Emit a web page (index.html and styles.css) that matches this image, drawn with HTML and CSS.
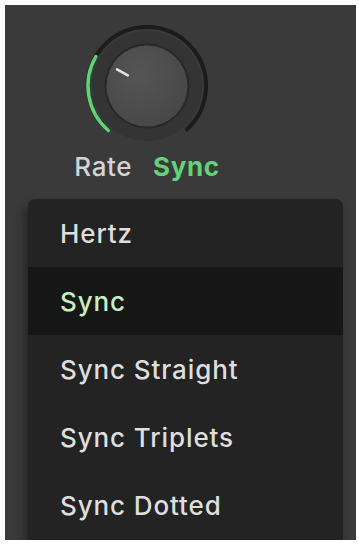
FILE: index.html
```html
<!DOCTYPE html>
<html>
<head>
<meta charset="utf-8">
<link rel="stylesheet" href="styles.css">
</head>
<body>
<div class="panel">
  <div class="control">
    <svg class="knob" width="130" height="130" viewBox="0 0 130 130">
      <defs>
        <radialGradient id="kg" cx="40%" cy="35%" r="70%">
          <stop offset="0" stop-color="#555555"/>
          <stop offset="1" stop-color="#474747"/>
        </radialGradient>
      </defs>
      <circle cx="65" cy="65" r="55" fill="#343434"/>
      <path d="M26.3 109.5 A59 59 0 1 1 103.7 109.5" fill="none" stroke="#1c1c1c" stroke-width="4"/>
      <path d="M26.3 109.5 A59 59 0 0 1 13.9 35.5" fill="none" stroke="#5fd27a" stroke-width="3.5" stroke-linecap="round"/>
      <circle cx="65" cy="65" r="42.5" fill="#282828"/>
      <circle cx="65" cy="65" r="40.5" fill="url(#kg)"/>
      <line x1="45.8" y1="54.3" x2="35" y2="48.3" stroke="#e2e2e2" stroke-width="2.6" stroke-linecap="round"/>
    </svg>
    <div class="labels">
      <span class="label">Rate</span>
      <span class="value">Sync</span>
    </div>
  </div>
  <ul class="menu">
    <li class="item">Hertz</li>
    <li class="item selected">Sync</li>
    <li class="item">Sync Straight</li>
    <li class="item">Sync Triplets</li>
    <li class="item">Sync Dotted</li>
  </ul>
</div>
</body>
</html>
```
FILE: styles.css
```css
html, body {
  margin: 0;
  padding: 0;
  background: #ffffff;
}
body {
  padding: 5px 3px 5px 5px;
  font-family: Inter, "Liberation Sans", Arial, sans-serif;
}
.panel {
  height: 535px;
  background: #3a3a3a;
  overflow: hidden;
  display: flex;
  flex-direction: column;
}
.control {
  width: 160px;
  margin-left: 62px;
  padding-top: 16px;
  display: flex;
  flex-direction: column;
  align-items: center;
}
.knob {
  display: block;
}
.labels {
  height: 30px;
  display: flex;
  align-items: center;
  gap: 21px;
  font-size: 26px;
  letter-spacing: 0.6px;
  white-space: nowrap;
}
.label {
  color: #d4d4d4;
  font-weight: 500;
}
.value {
  color: #62d378;
  font-weight: 700;
}
.menu {
  list-style: none;
  margin: 18px 13px 0 23px;
  padding: 0;
  background: #232323;
  border-radius: 7px 7px 0 0;
  flex: 1;
  box-shadow: -4px 6px 10px rgba(0,0,0,0.35);
}
.item {
  height: 68px;
  display: flex;
  align-items: center;
  padding-left: 32px;
  font-size: 26px;
  font-weight: 500;
  letter-spacing: 0.9px;
  color: #dedede;
  white-space: nowrap;
}
.item.selected {
  background: #171717;
  color: #c6efc0;
}
```
